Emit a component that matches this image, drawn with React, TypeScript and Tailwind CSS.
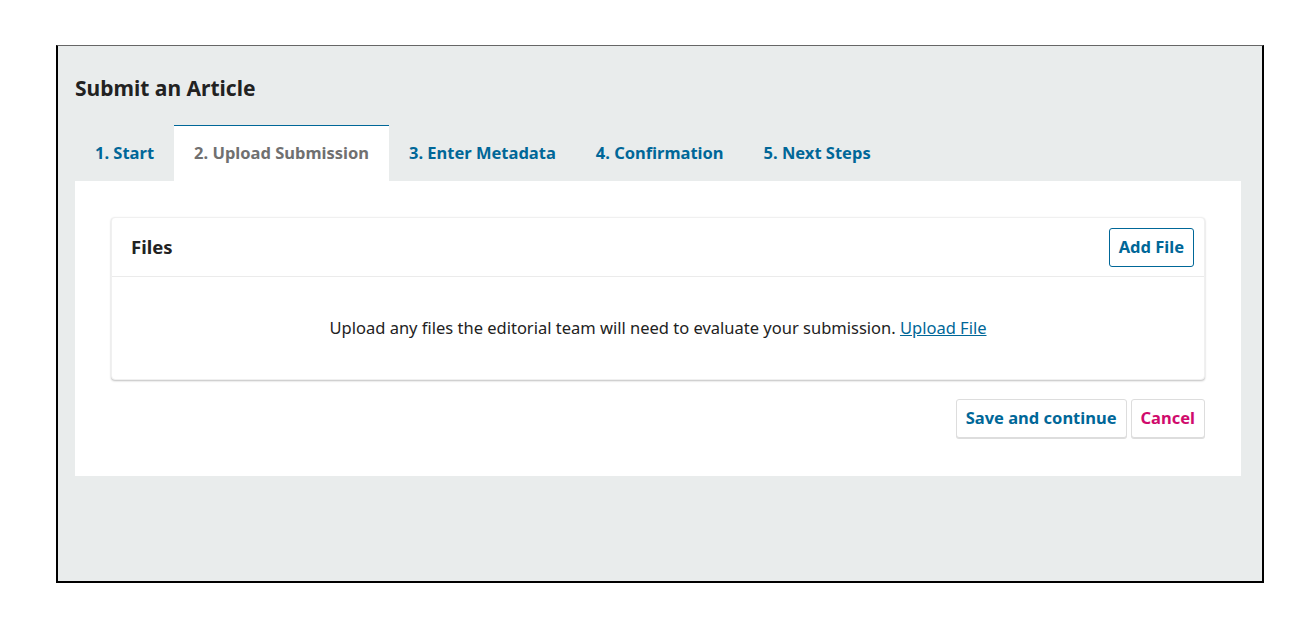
const tabs = ['1. Start', '2. Upload Submission', '3. Enter Metadata', '4. Confirmation', '5. Next Steps'];

const App = () => {
  return (
    <div className="w-[1308px] h-[620px] bg-white pt-[45px] pl-[56px] font-['Noto_Sans',sans-serif]">
      <div className="w-[1208px] h-[538px] bg-[#e9ecec] border-t border-t-[#666] border-l-2 border-r-2 border-b-2 border-black pl-[17px] pr-[21px]">
        {/* HEADER */}
        <h1 className="pt-[27px] text-[21px] leading-[30px] font-bold text-[#222]">Submit an Article</h1>

        {/* STEP TABS */}
        <div className="flex mt-[22px] h-[56px]">
          {tabs.map((tab, i) => (
            <div
              key={tab}
              className={
                i === 1
                  ? 'flex items-center px-[20px] bg-white border-t border-[#006798] text-[#707070] text-[16.5px] font-bold'
                  : 'flex items-center px-[20px] text-[#006798] text-[16.5px] font-bold'
              }
            >
              {tab}
            </div>
          ))}
        </div>

        {/* PANEL */}
        <div className="bg-white px-[36px] pt-[36px] pb-[38px]">
          <div className="rounded-[4px] bg-white shadow-[0_1px_2px_rgba(0,0,0,0.25)] border border-[#f0f0f0]">
            <div className="flex items-center justify-between h-[59px] pl-[19px] pr-[10px] border-b border-[#ebebeb]">
              <span className="text-[18.5px] font-bold text-[#222]">Files</span>
              <button className="h-[39px] px-[9px] rounded-[3px] border border-[#006798] text-[#006798] text-[16.5px] font-bold bg-white">
                Add File
              </button>
            </div>
            <div className="h-[102px] flex items-center justify-center text-[16.5px] text-[#222]">
              <span>
                Upload any files the editorial team will need to evaluate your submission.{' '}
                <a className="text-[#006798] underline">Upload File</a>
              </span>
            </div>
          </div>

          <div className="flex justify-end gap-[4px] mt-[19px]">
            <button className="h-[39px] px-[9px] rounded-[3px] border border-[#ddd] shadow-[0_1px_0_#ddd] bg-white text-[#006798] text-[16.5px] font-bold">
              Save and continue
            </button>
            <button className="h-[39px] px-[9px] rounded-[3px] border border-[#ddd] shadow-[0_1px_0_#ddd] bg-white text-[#d00a6c] text-[16.5px] font-bold">
              Cancel
            </button>
          </div>
        </div>
      </div>
    </div>
  );
};

export default App;
